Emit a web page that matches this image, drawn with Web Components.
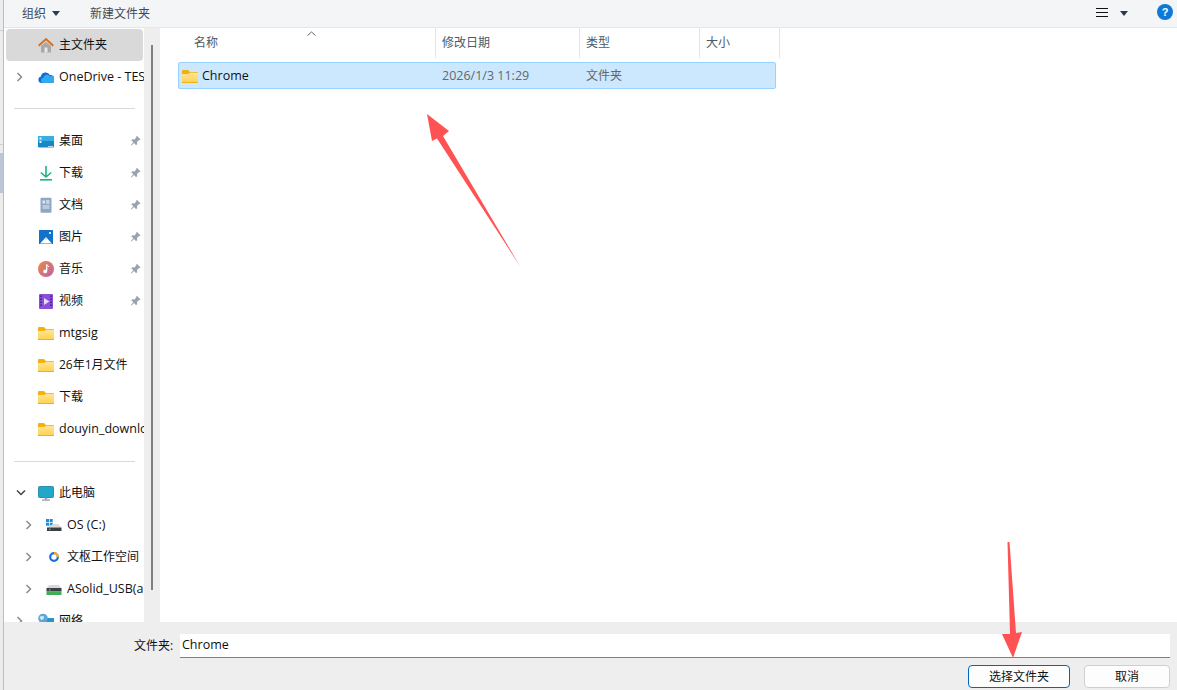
<!DOCTYPE html>
<html lang="zh">
<head>
<meta charset="utf-8">
<title>选择文件夹</title>
<style>
  html, body { margin: 0; height: 100%; overflow: hidden; background: #fff; }
  body { font: 12px/16px "Open Sans", "Noto Sans CJK SC", sans-serif; color: #1a1a1a; }
</style>
</head>
<body>
<file-dialog></file-dialog>

<script>
const FOLDER_GRAD = '<linearGradient id="fg" x1="0" y1="0" x2="0" y2="1"><stop offset="0" stop-color="#ffe596"/><stop offset="1" stop-color="#ffd050"/></linearGradient>';

const ICONS = {
  home: `<path d="M3 9v6.500h10V9L8 4.800z" fill="#a9a9a9"/><rect x="6.500" y="10.500" width="3" height="5" fill="#e8e8e8"/><path d="M.7 8.700 8 2l7.300 6.700" fill="none" stroke="#d9701c" stroke-width="2"/>`,
  cloud: `<path d="M3.500 14a3.300 3.300 0 0 1-.6-6.500 4.800 4.800 0 0 1 9-1.500A3.500 3.500 0 0 1 16 10l-6 4z" fill="#0c6fd8"/><path d="M5 14a2.700 2.700 0 0 1 .3-5.300A3.900 3.900 0 0 1 12.300 7.500a3.300 3.300 0 0 1 3.700 6.500z" fill="#35a8ee"/>`,
  desktop: `<rect x="0" y="3" width="16" height="11.500" rx="1" fill="#1689c4"/><rect x="0" y="3" width="16" height="5" fill="#38aee0"/><rect x="1.500" y="4.500" width="2" height="2" fill="#e4f5fb"/><rect x="1.500" y="8" width="2" height="2" fill="#e4f5fb"/><rect x="10" y="13" width="5" height=".8" fill="#e4f5fb"/>`,
  download: `<path d="M8 1v11M2.800 7.500 8 12l5.200-4.500" fill="none" stroke="#1fb28a" stroke-width="1.600"/><rect x="2" y="14" width="12" height="1.600" fill="#1fb28a"/>`,
  doc: `<rect x="2.500" y=".8" width="11" height="15" rx="1" fill="#8fa6c4"/><path d="M8 4h3.500M8 6h3.500" stroke="#fff"/><path d="M4.500 9h7M4.500 11h7" stroke="#e8eef6"/><rect x="4.500" y="3.500" width="2.500" height="3" fill="#dfe7f1"/>`,
  picture: `<rect x="1" y="1" width="14" height="14" rx=".5" fill="#1272c9"/><path d="M2 14.500 8 8.300l6 6.200z" fill="#fff"/><path d="M6.300 10.100 8 8.300l1.800 1.800-1.800.8z" fill="#bfe0fa"/><circle cx="12" cy="4" r="1.100" fill="#fff"/>`,
  music: `<defs><linearGradient id="mg" x1="0" y1="0" x2="1" y2="1"><stop offset="0" stop-color="#ef8a45"/><stop offset="1" stop-color="#b962a8"/></linearGradient></defs><circle cx="8" cy="8" r="8" fill="url(#mg)"/><path d="M8.700 3.500v6.500" stroke="#fff" stroke-width="1.300"/><path d="M8.700 3.500c.5 1.300 1.800 1.500 2.300 2.500" stroke="#fff" fill="none"/><circle cx="7.200" cy="10.400" r="1.900" fill="#fff"/>`,
  video: `<rect x="1" y="1" width="14" height="15" rx="1" fill="#8a4fd8"/><path d="M3 2.500V4M3 5.500V7M3 8.500V10M3 11.500V13M13 2.500V4M13 5.500V7M13 8.500V10M13 11.500V13" stroke="#3c1d78" stroke-width="1.500"/><path d="M6 5v7l5.500-3.500z" fill="#e6d8fb"/>`,
  folder: `<defs>${FOLDER_GRAD}</defs><path d="M0 3a1 1 0 0 1 1-1h5l2 2h7a1 1 0 0 1 1 1V8H0z" fill="#f2b10e"/><path d="M0 6h6.500L8 4.800h7a1 1 0 0 1 1 1V14a1 1 0 0 1-1 1H1a1 1 0 0 1-1-1z" fill="url(#fg)"/><rect x="0" y="14" width="16" height="1" fill="#f2b10e"/>`,
  pc: `<rect x=".5" y="1.500" width="15" height="11" rx="1" fill="#22a7cb" stroke="#167c9e" stroke-width=".8"/><rect x="6.800" y="12.500" width="2.400" height="2" fill="#8b98a3"/><rect x="4" y="14.500" width="8" height="1.200" fill="#8b98a3"/>`,
  osdrive: `<rect x="0" y="2" width="3" height="3" fill="#1690e0"/><rect x="3.700" y="2" width="3" height="3" fill="#1690e0"/><rect x="0" y="5.700" width="3" height="3" fill="#1690e0"/><rect x="3.700" y="5.700" width="3" height="3" fill="#1690e0"/><path d="M7 7h5l3.500 3.500H1z" fill="#dadada"/><rect x="1" y="10.500" width="14.500" height="3.500" fill="#3a3f44"/><rect x="3" y="11.700" width="1.500" height="1.200" fill="#4be06a"/>`,
  wps: `<circle cx="8" cy="8" r="3.800" fill="none" stroke="#1c6de0" stroke-width="2.200"/><path d="M8 4.200A3.800 3.800 0 0 1 11.800 8" fill="none" stroke="#f6b21b" stroke-width="2.200"/>`,
  usb: `<path d="M3 4h10l2.500 3.500H.5z" fill="#d8d8d8"/><rect x=".5" y="7" width="15" height="3.500" fill="#3a3f44"/><rect x="3" y="8.200" width="1.500" height="1.200" fill="#4be06a"/><rect x=".5" y="10.500" width="15" height="3.500" fill="#3fae55"/>`,
  network: `<rect x="4" y="5" width="12" height="9" fill="#2595c4"/><circle cx="5" cy="5.500" r="4.800" fill="#5aa7d8"/><path d="M1.500 4c2-1.500 4-1 4.500 0s-1 3-3 3z" fill="#cfe6f3"/>`,
  pin: `<path d="M8.500 1 13 5.500l-1.500 1-.6-.3L8.600 8.500l.3 2.700-1.300 1.300L5 9.900 1.800 13 1 12.200l3.100-3.200L1.500 6.400l1.300-1.300 2.700.3 2.300-2.300-.3-.6z" fill="#9aa3ab"/>`
};

function icon(name, w = 16, h = 16) {
  return `<svg width="${w}" height="${h}" viewBox="0 0 16 16" aria-hidden="true">${ICONS[name] || ''}</svg>`;
}

class NavRow extends HTMLElement {
  connectedCallback() {
    const level = this.getAttribute('level') || '0';
    const chev = this.getAttribute('chevron');
    const ic = this.getAttribute('icon');
    const pinned = this.hasAttribute('pinned');
    let chevSvg = '';
    if (chev === 'right') chevSvg = '<svg width="8" height="10" viewBox="0 0 8 10"><path d="M1.500 1 5.500 5l-4 4" fill="none" stroke="#8a8a8a" stroke-width="1.500"/></svg>';
    if (chev === 'down') chevSvg = '<svg width="10" height="8" viewBox="0 0 10 8"><path d="M1 1.500 5 5.500l4-4" fill="none" stroke="#444" stroke-width="1.500"/></svg>';
    this.attachShadow({ mode: 'open' });
    this.shadowRoot.innerHTML = `
      <style>
        :host {
          display: flex;
          align-items: center;
          height: 32px;
          padding-left: ${level === '1' ? 21 : 12}px;
          white-space: nowrap;
          overflow: hidden;
          position: relative;
          border-radius: 4px;
          color: #111;
        }
        :host([selected]) { background: #d9d9d9; margin: 0 1px 0 2px; padding-left: 10px; }
        :host([latin]) { font-size: 12.5px; }
        .chev { width: ${level === '1' ? 21 : 22}px; display: flex; align-items: center; flex: none; }
        .ic { width: 16px; height: 16px; flex: none; display: block; margin-right: 5px; }
        svg { display: block; }
        .label { flex: none; }
        .pin { position: absolute; right: 1px; top: 10px; background: #fff; }
      </style>
      <span class="chev">${chevSvg}</span>
      <span class="ic">${icon(ic)}</span>
      <span class="label"><slot></slot></span>
      ${pinned ? `<span class="pin">${icon('pin', 13, 13)}</span>` : ''}
    `;
  }
}

class NavDivider extends HTMLElement {
  connectedCallback() {
    this.attachShadow({ mode: 'open' });
    this.shadowRoot.innerHTML = `
      <style>
        :host { display: flex; align-items: center; padding: 0 9px 0 10px; height: 32px; }
        i { display: block; width: 100%; height: 1px; background: #d9d9d9; }
      </style><i></i>`;
  }
}

class FdToolbar extends HTMLElement {
  connectedCallback() {
    this.attachShadow({ mode: 'open' });
    this.shadowRoot.innerHTML = `
      <style>
        :host {
          display: flex; align-items: center; height: 28px; box-sizing: border-box;
          background: #f4f5f7; border-bottom: 1px solid #e6e6e6; color: #3d4a58;
          padding: 0 4px 0 18px;
        }
        .caret { width: 0; height: 0; border: 4px solid transparent; border-top: 5px solid #2b3a4c; border-bottom: 0; margin-left: 6px; }
        .new { margin-left: 30px; }
        .grow { flex: 1; }
        .menu { width: 12px; height: 9px; border-top: 1px solid #111; border-bottom: 1px solid #111; position: relative; box-sizing: border-box; margin-bottom: 2px; }
        .menu::after { content: ""; position: absolute; left: 0; right: 0; top: 3px; height: 1px; background: #111; }
        .menu-caret { margin-left: 12px; margin-right: 29px; }
        .help { width: 16px; height: 16px; border-radius: 50%; background: #0f7ad6; color: #fff; font: bold 11px/16px "Liberation Sans", sans-serif; text-align: center; margin-bottom: 3px; }
      </style>
      <span>组织</span><i class="caret"></i>
      <span class="new">新建文件夹</span>
      <span class="grow"></span>
      <i class="menu"></i><i class="caret menu-caret"></i>
      <span class="help">?</span>
    `;
  }
}

class FdSidebar extends HTMLElement {
  connectedCallback() {
    this.attachShadow({ mode: 'open' });
    this.shadowRoot.innerHTML = `
      <style>
        :host { display: flex; min-height: 0; overflow: hidden; background: #fff; }
        .tree { width: 140px; flex: none; overflow: hidden; padding-top: 1px; }
        .gutter { width: 16px; flex: none; background: #eeeeee; padding: 17px 0 0 7px; box-sizing: border-box; }
        .thumb { width: 2px; height: 545px; background: #808080; }
      </style>
      <div class="tree"><slot></slot></div>
      <div class="gutter"><div class="thumb"></div></div>
    `;
  }
}

class FdList extends HTMLElement {
  connectedCallback() {
    this.attachShadow({ mode: 'open' });
    this.shadowRoot.innerHTML = `
      <style>
        :host { display: block; background: #fff; padding-left: 18px; overflow: hidden; }
        .head { display: grid; grid-template-columns: 258px 144px 120px 80px; height: 26px; color: #4c5a68; width: 602px; }
        .head span { border-right: 1px solid #e5e5e5; padding-left: 6px; line-height: 30px; position: relative; box-sizing: border-box; }
        .head span:first-child { padding-left: 16px; }
        .sort { position: absolute; left: 129px; top: 3px; display: block; }
        .row {
          display: grid; grid-template-columns: 257px 144px 120px 1fr; align-items: center;
          width: 598px; height: 27px; box-sizing: border-box; margin-top: 8px;
          background: #cce8ff; border: 1px solid #99d1ff; border-radius: 2px;
        }
        .name { display: flex; align-items: center; gap: 4px; padding-left: 3px; color: #111; font-size: 12.5px; }
        .muted { color: #666; padding-left: 6px; }
        .date { font-size: 12.5px; }
        svg { display: block; }
      </style>
      <div class="head">
        <span>名称<svg class="sort" width="9" height="5" viewBox="0 0 9 5"><path d="M.5 4.500 4.500 1l4 3.500" fill="none" stroke="#666"/></svg></span>
        <span>修改日期</span><span>类型</span><span>大小</span>
      </div>
      <div class="row">
        <div class="name">${icon('folder')}<span>Chrome</span></div>
        <div class="muted date">2026/1/3 11:29</div>
        <div class="muted">文件夹</div>
        <div></div>
      </div>
    `;
  }
}

class FdFooter extends HTMLElement {
  connectedCallback() {
    this.attachShadow({ mode: 'open' });
    this.shadowRoot.innerHTML = `
      <style>
        :host { display: block; background: #eeeeee; height: 68px; box-sizing: border-box; padding: 12px 7px 0 130px; }
        .line { display: flex; align-items: center; gap: 6px; height: 24px; }
        .line label { flex: none; width: 40px; color: #111; white-space: nowrap; }
        .input { flex: 1; height: 24px; box-sizing: border-box; background: #fff; border-bottom: 1px solid #808080; padding: 3px 2px 0; color: #111; font-size: 12.5px; }
        .btns { display: flex; justify-content: flex-end; gap: 14px; margin-top: 7px; }
        .btn { height: 23px; box-sizing: border-box; border-radius: 4px; background: #fdfdfd; border: 1px solid #cfcfcf; text-align: center; line-height: 22px; width: 86px; color: #111; }
        .primary { width: 102px; border: 1.500px solid #0067c0; line-height: 21px; }
      </style>
      <div class="line"><label>文件夹:</label><div class="input">Chrome</div></div>
      <div class="btns"><div class="btn primary">选择文件夹</div><div class="btn">取消</div></div>
    `;
  }
}

class EdgeStrip extends HTMLElement {
  connectedCallback() {
    this.attachShadow({ mode: 'open' });
    this.shadowRoot.innerHTML = `
      <style>
        :host { display: block; width: 4px; box-sizing: border-box; background: #ececec; border-right: 1px solid #bdbdbd; }
        i { display: block; height: 1px; background: #cfcfcf; }
        .a { margin-top: 30px; }
        .b { margin-top: 113px; }
        .c { margin-top: 8px; height: 40px; background: #bdc6d6; }
      </style>
      <i class="a"></i><i class="b"></i><i class="c"></i>
    `;
  }
}

class RedArrows extends HTMLElement {
  connectedCallback() {
    this.attachShadow({ mode: 'open' });
    this.shadowRoot.innerHTML = `
      <style>
        :host { position: absolute; inset: 0; pointer-events: none; display: block; }
        svg { display: block; }
      </style>
      <svg width="1177" height="690" viewBox="0 0 1177 690">
        <path d="M427 114 449 131 443 136 520.500 267 437 138.500 432 141z" fill="#ff5353"/>
        <path d="M1007.500 542 1009.500 542 1016 633 1022 632 1013 658 1002 634 1010 634z" fill="#ff5353"/>
      </svg>
    `;
  }
}

class FileDialog extends HTMLElement {
  connectedCallback() {
    this.attachShadow({ mode: 'open' });
    this.shadowRoot.innerHTML = `
      <style>
        :host { display: flex; position: relative; width: 1177px; height: 690px; overflow: hidden; }
        .main { flex: 1; min-width: 0; display: flex; flex-direction: column; }
        .mid { flex: 1; min-height: 0; display: grid; grid-template-columns: 156px 1fr; }
      </style>
      <edge-strip></edge-strip>
      <div class="main">
        <fd-toolbar></fd-toolbar>
        <div class="mid">
          <fd-sidebar>
            <nav-row icon="home" selected>主文件夹</nav-row>
            <nav-row icon="cloud" chevron="right" latin style="height:31px">OneDrive - TESTS</nav-row>
            <nav-divider style="height:33px"></nav-divider>
            <nav-row icon="desktop" pinned>桌面</nav-row>
            <nav-row icon="download" pinned>下载</nav-row>
            <nav-row icon="doc" pinned>文档</nav-row>
            <nav-row icon="picture" pinned>图片</nav-row>
            <nav-row icon="music" pinned>音乐</nav-row>
            <nav-row icon="video" pinned>视频</nav-row>
            <nav-row icon="folder" latin>mtgsig</nav-row>
            <nav-row icon="folder">26年1月文件</nav-row>
            <nav-row icon="folder">下载</nav-row>
            <nav-row icon="folder" latin>douyin_download</nav-row>
            <nav-divider></nav-divider>
            <nav-row icon="pc" chevron="down">此电脑</nav-row>
            <nav-row icon="osdrive" chevron="right" level="1" latin>OS (C:)</nav-row>
            <nav-row icon="wps" chevron="right" level="1">文枢工作空间</nav-row>
            <nav-row icon="usb" chevron="right" level="1" latin>ASolid_USB(a)</nav-row>
            <nav-row icon="network" chevron="right">网络</nav-row>
          </fd-sidebar>
          <fd-list></fd-list>
        </div>
        <fd-footer></fd-footer>
      </div>
      <red-arrows></red-arrows>
    `;
  }
}

customElements.define('nav-row', NavRow);
customElements.define('nav-divider', NavDivider);
customElements.define('fd-toolbar', FdToolbar);
customElements.define('fd-sidebar', FdSidebar);
customElements.define('fd-list', FdList);
customElements.define('fd-footer', FdFooter);
customElements.define('edge-strip', EdgeStrip);
customElements.define('red-arrows', RedArrows);
customElements.define('file-dialog', FileDialog);
</script>
</body>
</html>
